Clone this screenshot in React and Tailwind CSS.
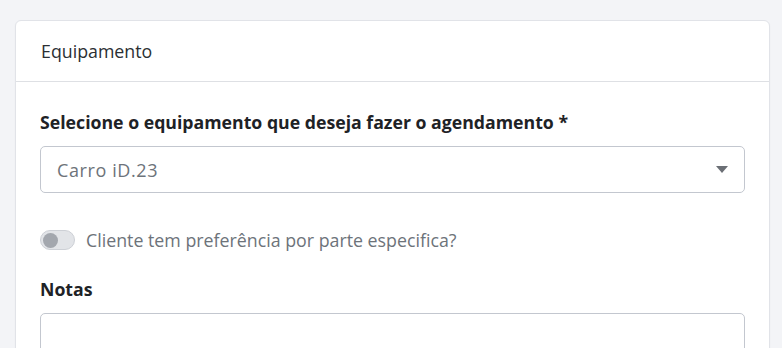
import React from 'react';

const App = () => {
  return (
    <div
      className="w-[782px] h-[348px] overflow-hidden bg-[#f3f4f7] pt-[20px] pl-[15px] pr-[12px]"
      style={{ fontFamily: '"Open Sans", "Liberation Sans", sans-serif' }}
    >
      <div className="bg-white border border-[#e1e3e8] rounded-[6px] shadow-[0_1px_2px_rgba(0,0,0,0.04)]">
        {/* cabeçalho */}
        <div className="h-[61px] flex items-center px-[25px] border-b border-[#dee0e4]">
          <span className="text-[17.8px] leading-[24px] text-[#2b2f33]">Equipamento</span>
        </div>

        <div className="px-[24px] pt-[27px]">
          <label className="block text-[17.7px] font-bold text-[#1e2226] leading-[26px]">
            Selecione o equipamento que deseja fazer o agendamento *
          </label>

          <div className="mt-[11px] h-[47px] flex items-center justify-between border border-[#c3c7cf] rounded-[5px] px-[16px]">
            <span className="text-[18px] leading-[24px] tracking-[0.6px] text-[#6d737a]">Carro iD.23</span>
            <svg width="12" height="7" viewBox="0 0 12 7">
              <path d="M0 0 L12 0 L6 7 Z" fill="#6b6f75" />
            </svg>
          </div>

          <div className="mt-[35px] flex items-center gap-[11px]">
            <div className="w-[35px] h-[20px] rounded-full bg-[#e2e4e8] border border-[#cdd0d6] flex items-center px-[2px]">
              <div className="w-[15px] h-[15px] rounded-full bg-[#a3a7ae]" />
            </div>
            <span className="text-[17.8px] leading-[24px] text-[#6d737a]">Cliente tem preferência por parte especifica?</span>
          </div>

          <label className="block mt-[24px] text-[17.7px] font-bold text-[#1e2226] leading-[26px]">
            Notas
          </label>

          <div className="mt-[11px] h-[80px] border border-[#c3c7cf] rounded-[5px]" />
        </div>
      </div>
    </div>
  );
};

export default App;
